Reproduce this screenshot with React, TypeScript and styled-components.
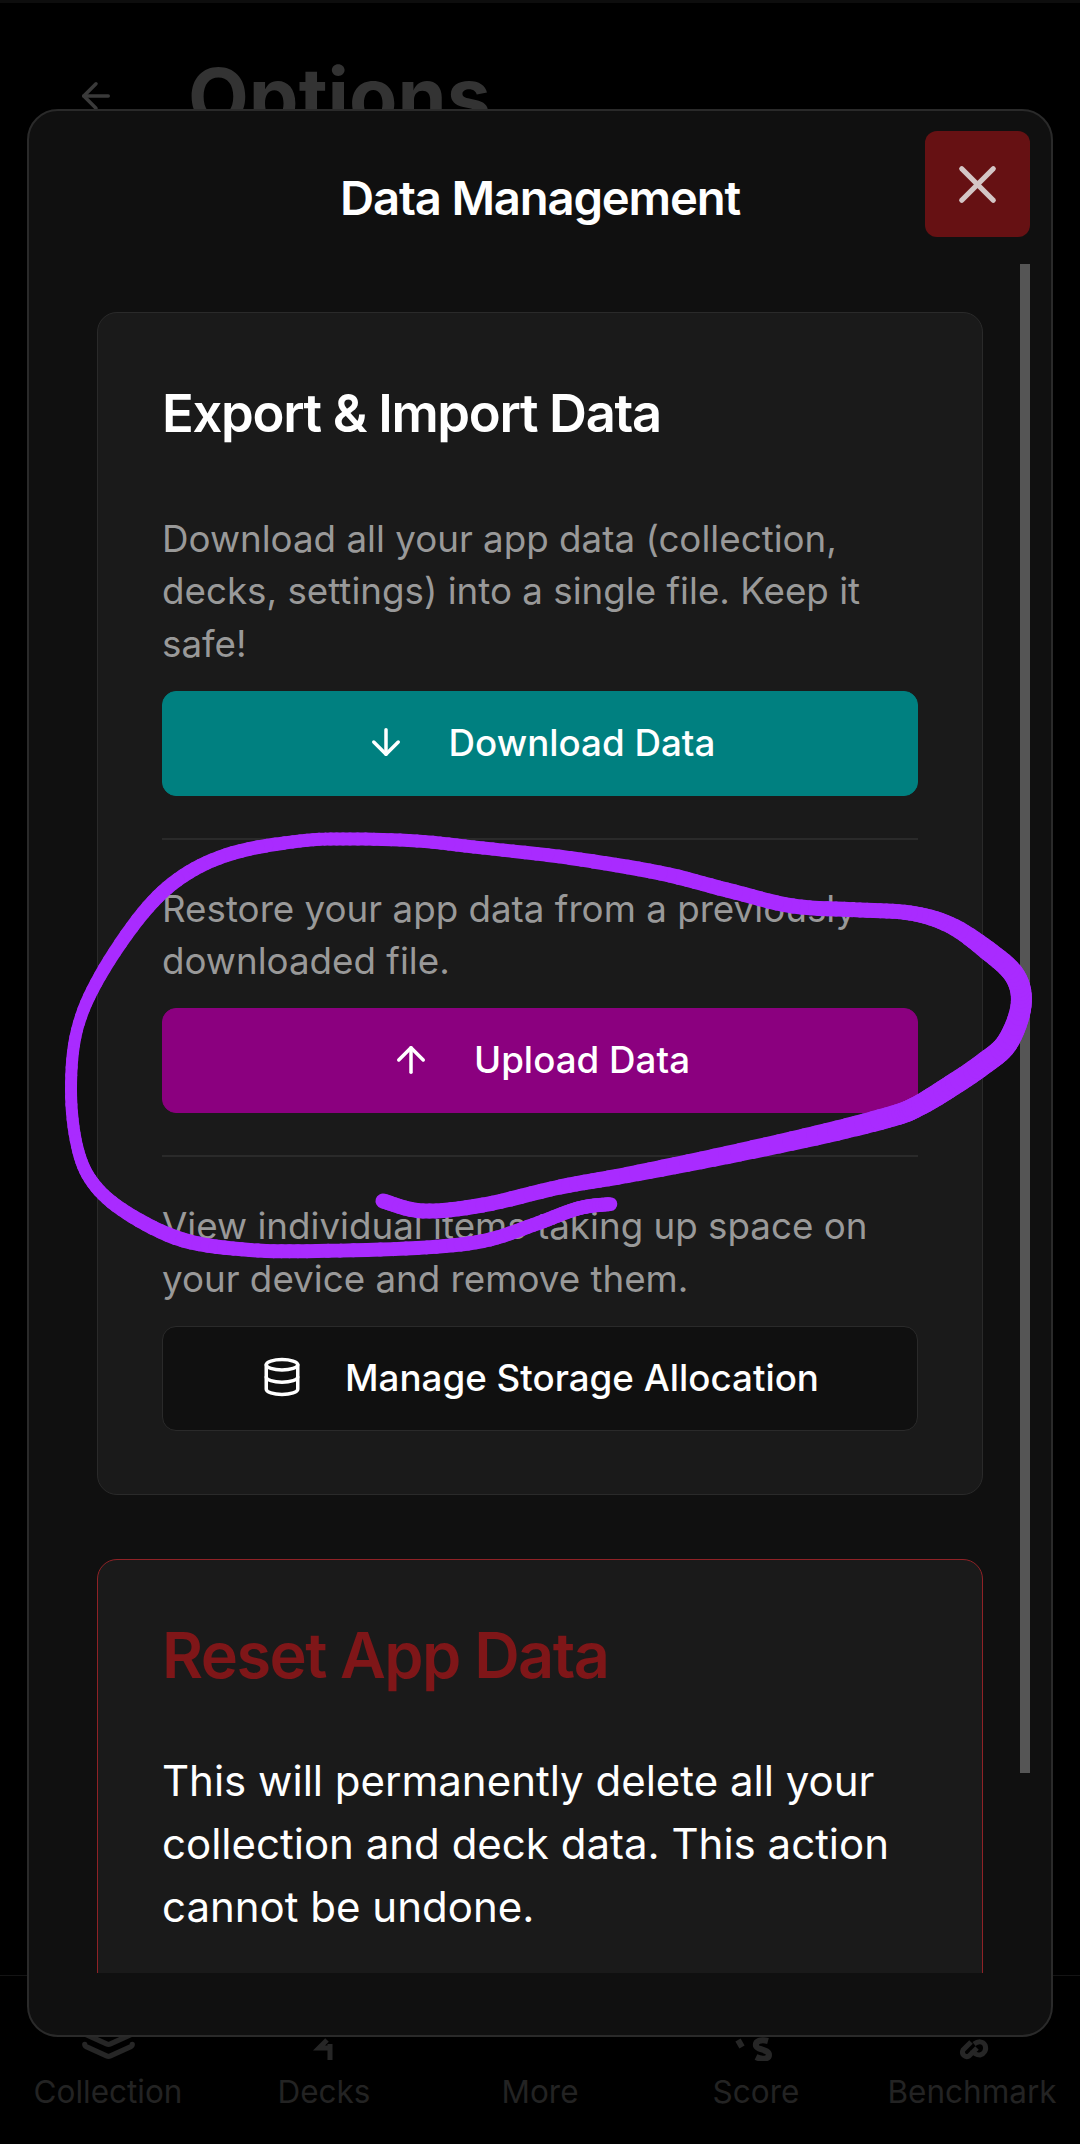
import React from "react";
import styled, { createGlobalStyle } from "styled-components";
import { ArrowDown, ArrowLeft, ArrowUp, Database, Layers, X } from "lucide-react";

const GlobalStyle = createGlobalStyle`
  html, body {
    margin: 0;
    padding: 0;
    background: #000;
  }
  * {
    box-sizing: border-box;
  }
`;

const Page = styled.div`
  position: relative;
  width: 1080px;
  height: 2144px;
  overflow: hidden;
  background: #000;
  font-family: Inter, "Liberation Sans", sans-serif;
  border-top: 3px solid #0d0d0d;
  display: flex;
  flex-direction: column;
  justify-content: space-between;
`;

const Header = styled.header`
  display: flex;
  align-items: center;
  gap: 71px;
  padding: 48px 0 0 75px;
  color: #3a3a3a;
`;

const PageTitle = styled.h1`
  margin: 0;
  font-size: 79px;
  line-height: 90px;
  font-weight: 700;
  color: #333;
`;

const BottomNav = styled.nav`
  display: grid;
  grid-template-columns: repeat(5, 216px);
  height: 169px;
  border-top: 1px solid #141414;
  padding-top: 21px;
`;

const NavItem = styled.div`
  display: flex;
  flex-direction: column;
  align-items: center;
  gap: 10px;
  color: #262626;
`;

const NavIcon = styled.div`
  height: 64px;
  display: flex;
  align-items: flex-end;
`;

const NavLabel = styled.span`
  font-size: 31.5px;
  line-height: 42px;
  color: #232323;
`;

const Modal = styled.section`
  position: absolute;
  left: 27px;
  top: 106px;
  width: 1026px;
  height: 1928px;
  border: 2px solid #2a2a2a;
  border-radius: 31px;
  background: #101010;
  display: flex;
  flex-direction: column;
`;

const ModalHeader = styled.div`
  height: 153px;
  flex: none;
  padding-top: 20px;
  display: flex;
  align-items: center;
  justify-content: center;
`;

const ModalTitle = styled.h2`
  margin: 0;
  font-size: 47.25px;
  line-height: 60px;
  letter-spacing: -1.18px;
  font-weight: 600;
  color: #fff;
`;

const CloseButton = styled.button`
  position: absolute;
  right: 21px;
  top: 20px;
  width: 105px;
  height: 106px;
  padding: 0;
  border: 0;
  border-radius: 12px;
  background: #661113;
  color: #d4c6c6;
  display: flex;
  align-items: center;
  justify-content: center;
`;

const ScrollArea = styled.div`
  position: relative;
  height: 1709px;
  overflow: hidden;
  padding: 48px 68px 0;
  display: flex;
  flex-direction: column;
  gap: 64px;
`;

const ScrollThumb = styled.div`
  position: absolute;
  right: 21px;
  top: 0;
  width: 10px;
  height: 1509px;
  background: #555;
`;

const Card = styled.div<{ $danger?: boolean }>`
  flex: none;
  padding: 63px 64px;
  background: #1a1a1a;
  border: 1px solid ${(p) => (p.$danger ? "#8f2226" : "#2a2a2a")};
  border-radius: 20px;
`;

const CardTitle = styled.h3`
  margin: 0 0 61px;
  font-size: 52.5px;
  line-height: 74px;
  letter-spacing: -1.31px;
  font-weight: 600;
  color: #fff;
`;

const DangerTitle = styled.h3`
  margin: 0 0 62px;
  font-size: 63px;
  line-height: 64px;
  letter-spacing: -1.57px;
  font-weight: 600;
  color: #7f1618;
`;

const Description = styled.p`
  margin: 0 0 20.5px;
  padding-top: 1.5px;
  font-size: 36.75px;
  line-height: 52.5px;
  color: #999;
`;

const Warning = styled.p`
  margin: 0;
  font-size: 42px;
  line-height: 63px;
  color: #fff;
`;

const ActionButton = styled.button<{ $bg: string; $line?: string }>`
  width: 100%;
  height: 105px;
  padding: 0 0 2px;
  display: flex;
  align-items: center;
  justify-content: center;
  gap: 42px;
  border: 1px solid ${(p) => p.$line ?? p.$bg};
  border-radius: 14px;
  background: ${(p) => p.$bg};
  color: #fff;
  font-family: inherit;
  font-size: 36.75px;
  font-weight: 500;
`;

const Divider = styled.hr`
  margin: 42px 0 41.5px;
  height: 2px;
  border: 0;
  background: #2a2a2a;
`;

const ScribbleLayer = styled.svg`
  position: absolute;
  left: 0;
  top: 0;
  width: 1080px;
  height: 2144px;
  pointer-events: none;
`;

// x, y, stroke width of the hand-drawn circle
const scribble: [number, number, number][] = [
  [383, 1198, 15], [423, 1208, 15], [483, 1202, 15], [560, 1184, 15],
  [627, 1172, 16], [727, 1152, 18], [827, 1130, 20], [893, 1113, 21],
  [918, 1103, 21], [948, 1085, 22], [982, 1062, 22], [1007, 1040, 22],
  [1021, 1003, 21], [1015, 973, 21], [987, 947, 20], [950, 922, 17],
  [910, 910, 15], [860, 907, 15], [793, 903, 15], [727, 887, 15],
  [660, 870, 15], [570, 855, 14], [483, 845, 13], [417, 838, 13],
  [350, 836, 13], [300, 838, 13], [233, 850, 14], [183, 873, 14],
  [143, 910, 14], [100, 973, 13], [77, 1027, 12], [71, 1087, 12],
  [77, 1143, 12], [93, 1180, 13], [127, 1210, 14], [183, 1237, 15],
  [250, 1247, 14], [317, 1248, 14], [417, 1245, 14], [483, 1238, 14],
  [533, 1222, 14], [570, 1208, 14], [590, 1203, 14], [612, 1201, 14],
];

const scribbleSegments = () => {
  const out: { x1: number; y1: number; x2: number; y2: number; w: number }[] = [];
  const at = (i: number) => scribble[Math.max(0, Math.min(scribble.length - 1, i))];
  let prev: [number, number] | null = null;
  for (let i = 0; i < scribble.length - 1; i++) {
    const [p0, p1, p2, p3] = [at(i - 1), at(i), at(i + 1), at(i + 2)];
    for (let s = 0; s < 8; s++) {
      const t = s / 8;
      const cr = (k: 0 | 1) =>
        0.5 *
        (2 * p1[k] +
          (p2[k] - p0[k]) * t +
          (2 * p0[k] - 5 * p1[k] + 4 * p2[k] - p3[k]) * t * t +
          (3 * p1[k] - p0[k] - 3 * p2[k] + p3[k]) * t * t * t);
      const pt: [number, number] = [cr(0), cr(1)];
      if (prev) {
        out.push({
          x1: prev[0],
          y1: prev[1],
          x2: pt[0],
          y2: pt[1],
          w: p1[2] + (p2[2] - p1[2]) * t,
        });
      }
      prev = pt;
    }
  }
  return out;
};

const navItems = [
  { label: "Collection", icon: <Layers size={57} strokeWidth={2.2} /> },
  {
    label: "Decks",
    icon: (
      <svg width={63} height={63} viewBox="0 0 63 63" fill="none" stroke="currentColor" strokeWidth={5}>
        <path d="M34 42l-8 8h11M37 46v16" />
      </svg>
    ),
  },
  {
    label: "More",
    icon: <svg width={63} height={63} viewBox="0 0 63 63" />,
  },
  {
    label: "Score",
    icon: (
      <svg width={63} height={63} viewBox="0 0 63 63" fill="none" stroke="currentColor" strokeWidth={6}>
        <path d="M13 42l4 7M43 43c-7-2-13 0-12 5 1 4 13 3 13 9 0 4-7 5-13 2" />
      </svg>
    ),
  },
  {
    label: "Benchmark",
    icon: (
      <svg width={63} height={63} viewBox="0 0 63 63" fill="none" stroke="currentColor" strokeWidth={5}>
        <path d="M30 44l-8 8c-2 4 2 8 6 6l8-8M33 46c4-3 9-3 11 1 2 5-1 9-5 10-5 0-7-3-8-5" />
      </svg>
    ),
  },
];

const App = () => {
  return (
    <Page>
      <GlobalStyle />
      <Header>
        <ArrowLeft size={42} strokeWidth={2} />
        <PageTitle>Options</PageTitle>
      </Header>

      <BottomNav>
        {navItems.map((item) => (
          <NavItem key={item.label}>
            <NavIcon>{item.icon}</NavIcon>
            <NavLabel>{item.label}</NavLabel>
          </NavItem>
        ))}
      </BottomNav>

      <Modal>
        <ModalHeader>
          <ModalTitle>Data Management</ModalTitle>
        </ModalHeader>
        <CloseButton aria-label="Close">
          <X size={63} strokeWidth={2} />
        </CloseButton>

        <ScrollArea>
          <ScrollThumb />
          <Card>
            <CardTitle>Export &amp; Import Data</CardTitle>
            <Description>
              Download all your app data (collection, decks, settings) into a single file. Keep it safe!
            </Description>
            <ActionButton $bg="#008080">
              <ArrowDown size={42} strokeWidth={2} />
              Download Data
            </ActionButton>
            <Divider />
            <Description>Restore your app data from a previously downloaded file.</Description>
            <ActionButton $bg="#8b007f">
              <ArrowUp size={42} strokeWidth={2} />
              Upload Data
            </ActionButton>
            <Divider />
            <Description>View individual items taking up space on your device and remove them.</Description>
            <ActionButton $bg="#101010" $line="#2a2a2a">
              <Database size={42} strokeWidth={2} />
              Manage Storage Allocation
            </ActionButton>
          </Card>

          <Card $danger>
            <DangerTitle>Reset App Data</DangerTitle>
            <Warning>
              This will permanently delete all your collection and deck data. This action cannot be undone.
            </Warning>
          </Card>
        </ScrollArea>
      </Modal>

      <ScribbleLayer viewBox="0 0 1080 2144" fill="none" stroke="#a92bff" strokeLinecap="round">
        {scribbleSegments().map((s, i) => (
          <line key={i} x1={s.x1} y1={s.y1} x2={s.x2} y2={s.y2} strokeWidth={s.w} />
        ))}
      </ScribbleLayer>
    </Page>
  );
};

export default App;
